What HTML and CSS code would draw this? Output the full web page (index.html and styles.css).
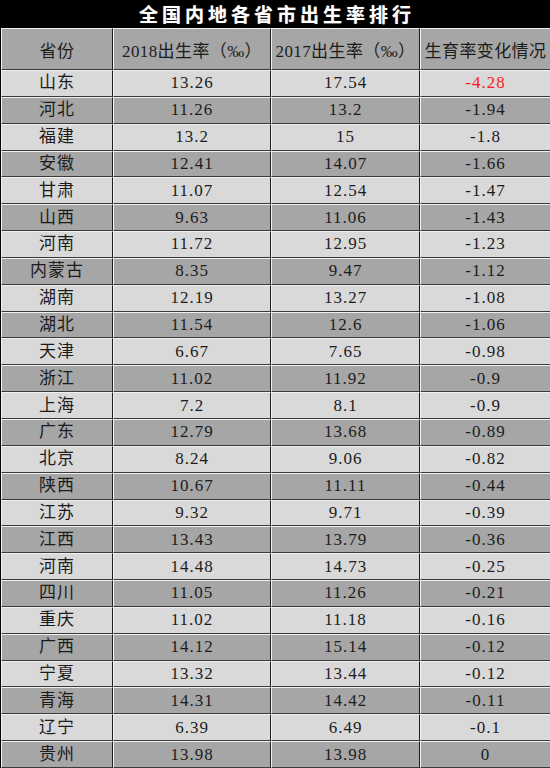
FILE: index.html
```html
<!DOCTYPE html>
<html lang="zh">
<head>
<meta charset="utf-8">
<link rel="stylesheet" href="styles.css">
</head>
<body>
<div class="title">全国内地各省市出生率排行</div>
<table class="grid">
<colgroup><col class="c1"><col class="c2"><col class="c3"><col class="c4"></colgroup>
<thead>
<tr><th>省份</th><th>2018出生率（‰）</th><th>2017出生率（‰）</th><th>生育率变化情况</th></tr>
</thead>
<tbody>
<tr class="l"><td>山东</td><td>13.26</td><td>17.54</td><td class="red">-4.28</td></tr>
<tr class="d"><td>河北</td><td>11.26</td><td>13.2</td><td>-1.94</td></tr>
<tr class="l"><td>福建</td><td>13.2</td><td>15</td><td>-1.8</td></tr>
<tr class="d"><td>安徽</td><td>12.41</td><td>14.07</td><td>-1.66</td></tr>
<tr class="l"><td>甘肃</td><td>11.07</td><td>12.54</td><td>-1.47</td></tr>
<tr class="d"><td>山西</td><td>9.63</td><td>11.06</td><td>-1.43</td></tr>
<tr class="l"><td>河南</td><td>11.72</td><td>12.95</td><td>-1.23</td></tr>
<tr class="d"><td>内蒙古</td><td>8.35</td><td>9.47</td><td>-1.12</td></tr>
<tr class="l"><td>湖南</td><td>12.19</td><td>13.27</td><td>-1.08</td></tr>
<tr class="d"><td>湖北</td><td>11.54</td><td>12.6</td><td>-1.06</td></tr>
<tr class="l"><td>天津</td><td>6.67</td><td>7.65</td><td>-0.98</td></tr>
<tr class="d"><td>浙江</td><td>11.02</td><td>11.92</td><td>-0.9</td></tr>
<tr class="l"><td>上海</td><td>7.2</td><td>8.1</td><td>-0.9</td></tr>
<tr class="d"><td>广东</td><td>12.79</td><td>13.68</td><td>-0.89</td></tr>
<tr class="l"><td>北京</td><td>8.24</td><td>9.06</td><td>-0.82</td></tr>
<tr class="d"><td>陕西</td><td>10.67</td><td>11.11</td><td>-0.44</td></tr>
<tr class="l"><td>江苏</td><td>9.32</td><td>9.71</td><td>-0.39</td></tr>
<tr class="d"><td>江西</td><td>13.43</td><td>13.79</td><td>-0.36</td></tr>
<tr class="l"><td>河南</td><td>14.48</td><td>14.73</td><td>-0.25</td></tr>
<tr class="d"><td>四川</td><td>11.05</td><td>11.26</td><td>-0.21</td></tr>
<tr class="l"><td>重庆</td><td>11.02</td><td>11.18</td><td>-0.16</td></tr>
<tr class="d"><td>广西</td><td>14.12</td><td>15.14</td><td>-0.12</td></tr>
<tr class="l"><td>宁夏</td><td>13.32</td><td>13.44</td><td>-0.12</td></tr>
<tr class="d"><td>青海</td><td>14.31</td><td>14.42</td><td>-0.11</td></tr>
<tr class="l"><td>辽宁</td><td>6.39</td><td>6.49</td><td>-0.1</td></tr>
<tr class="d"><td>贵州</td><td>13.98</td><td>13.98</td><td>0</td></tr>
</tbody>
</table>
</body>
</html>
```
FILE: styles.css
```css
html, body {
  margin: 0;
  padding: 0;
  background: #000;
}
body {
  width: 550px;
  height: 768px;
  overflow: hidden;
  font-family: "Liberation Serif", "Noto Sans CJK SC", serif;
  color: #1c1c1c;
}
.title {
  height: 28px;
  line-height: 28px;
  background: #000;
  color: #fff;
  text-align: center;
  font-family: "Noto Sans CJK SC", sans-serif;
  font-weight: 700;
  font-size: 19px;
  letter-spacing: 4px;
  padding-left: 4px;
  text-shadow: 0 0 1px #888;
}
.grid {
  width: 550px;
  border-collapse: separate;
  border-spacing: 0;
  table-layout: fixed;
  border-left: 1px solid #000;
}
.c1 { width: 112px; }
.c2 { width: 158px; }
.c3 { width: 149px; }
.c4 { width: 131px; }
th, td {
  padding: 0;
  text-align: center;
  font-weight: 400;
  border-left: 1px solid #f4f4f4;
  border-right: 1px solid #1e1e1e;
  border-top: 1px solid #f0f0f0;
  border-bottom: 1px solid #3a3a3a;
  box-sizing: border-box;
}
th {
  height: 42px;
  background: #a6a6a6;
  font-size: 17px;
  letter-spacing: 0.4px;
}
td {
  height: 26.846px;
  line-height: 20px;
  font-size: 17px;
  letter-spacing: 1px;
}
tr.l td { background: #d9d9d9; }
tr.d td { background: #a6a6a6; }
td.red { color: #ff1a1a; }
```
